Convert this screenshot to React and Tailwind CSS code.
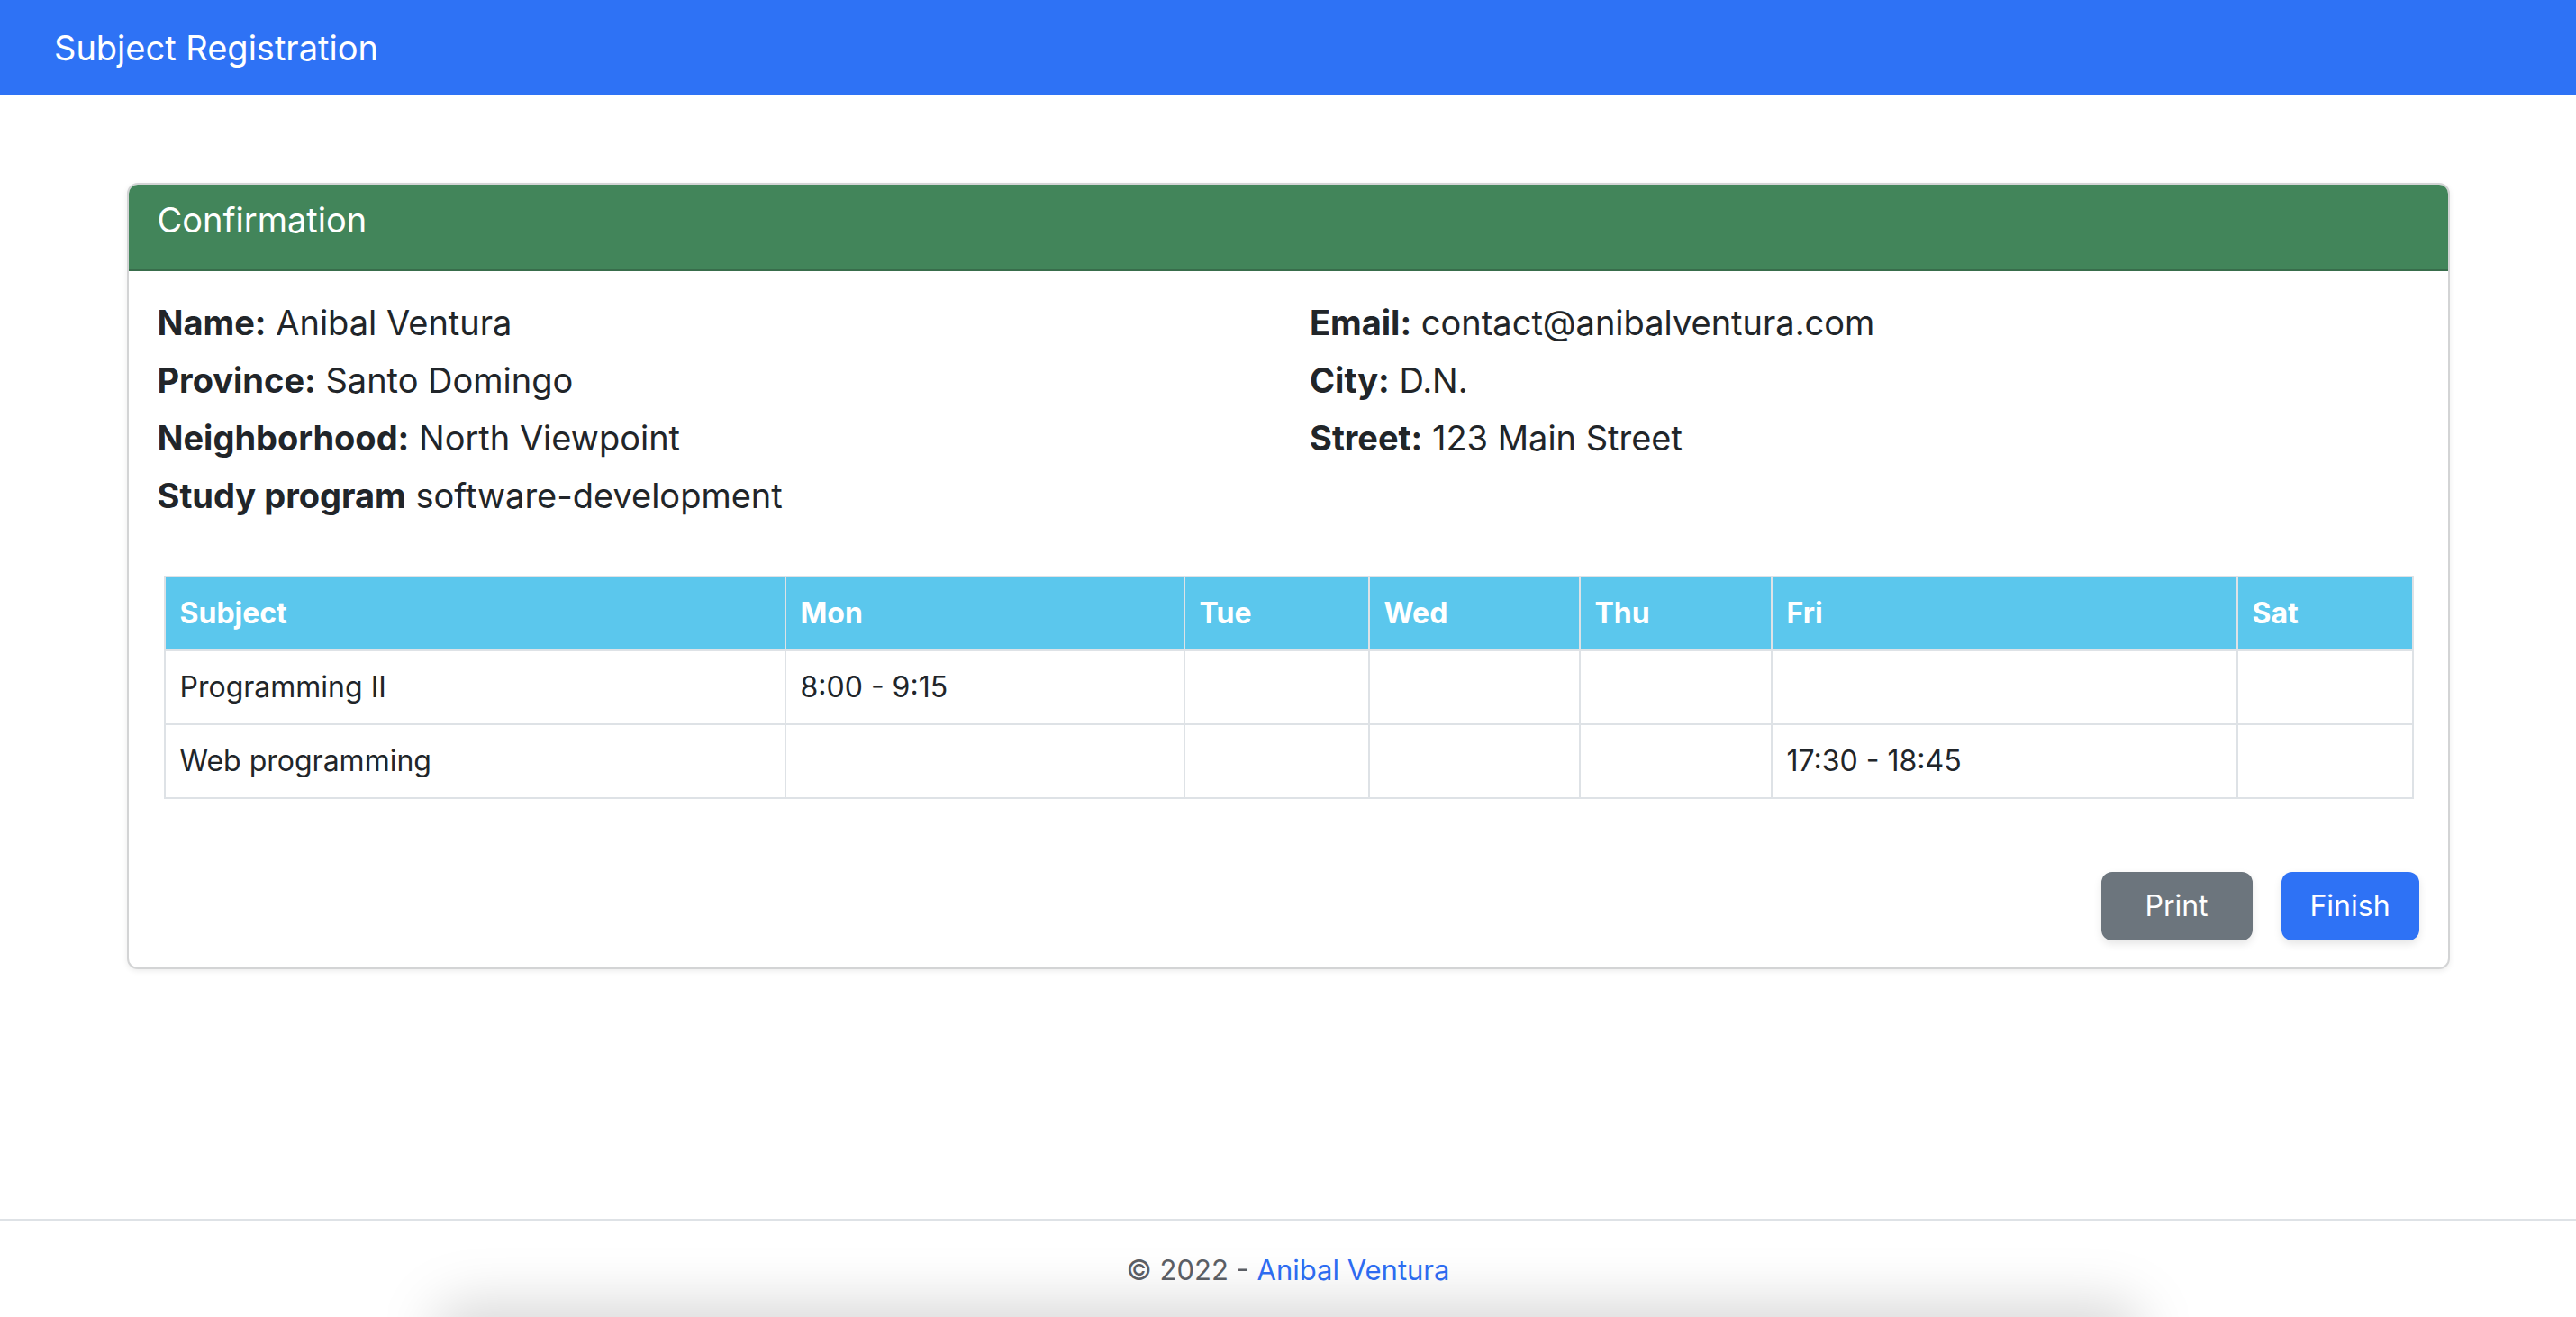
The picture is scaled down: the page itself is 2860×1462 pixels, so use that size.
import React from "react";

const info = [
  [["Name:", "Anibal Ventura"], ["Email:", "contact@anibalventura.com"]],
  [["Province:", "Santo Domingo"], ["City:", "D.N."]],
  [["Neighborhood:", "North Viewpoint"], ["Street:", "123 Main Street"]],
  [["Study program", "software-development"], null],
];

const cols = ["Subject", "Mon", "Tue", "Wed", "Thu", "Fri", "Sat"];
const widths = [689, 443, 205, 234, 213, 517, 195];

const rows = [
  ["Programming II", "8:00 - 9:15", "", "", "", "", ""],
  ["Web programming", "", "", "", "", "17:30 - 18:45", ""],
];

export default function App() {
  return (
    <div
      className="relative flex h-[1462px] w-[2860px] flex-col overflow-hidden bg-white text-[#212529]"
      style={{ fontFamily: "Inter, 'Noto Sans', sans-serif" }}
    >
      <nav className="flex h-[106px] shrink-0 items-center bg-[#2e72f5] px-[60px]">
        <span className="text-[38px] leading-[60px] text-white">Subject Registration</span>
      </nav>

      <main className="flex-1 pt-[97px]">
        <div className="mx-auto w-[2579px] overflow-hidden rounded-[12px] border-2 border-[#d3d4d5] bg-white shadow-[0_2px_6px_rgba(0,0,0,0.08)]">
          <div className="border-b-2 border-[#386d4b] bg-[#42855a] px-[32px] pt-[15px] pb-[31px]">
            <h5 className="text-[38px] leading-[48px] text-white">Confirmation</h5>
          </div>
          <div className="px-[32px] pt-[25px] pb-[30px]">
            <div className="grid grid-cols-2 gap-x-[48px]">
              {info.map((r, i) => (
                <React.Fragment key={i}>
                  {r.map((c, j) => (
                    <div key={j} className="h-[64px] text-[38px] leading-[64px]">
                      {c && (
                        <>
                          <span className="font-bold">{c[0]}</span> {c[1]}
                        </>
                      )}
                    </div>
                  ))}
                </React.Fragment>
              ))}
            </div>

            <table className="mt-[57px] ml-[7px] w-[2496px] table-fixed border-collapse border-2 border-[#dee2e6] text-[32px] leading-[48px]">
              <colgroup>
                {widths.map((w, i) => (
                  <col key={i} style={{ width: w }} />
                ))}
              </colgroup>
              <thead>
                <tr className="bg-[#5bc7ed]">
                  {cols.map((c) => (
                    <th
                      key={c}
                      className="border-2 border-[#dee2e6] px-[16px] py-[16px] text-left font-bold text-white"
                    >
                      {c}
                    </th>
                  ))}
                </tr>
              </thead>
              <tbody>
                {rows.map((r, i) => (
                  <tr key={i}>
                    {r.map((c, j) => (
                      <td key={j} className="h-[80px] border-2 border-[#dee2e6] px-[16px] py-[16px]">
                        {c}
                      </td>
                    ))}
                  </tr>
                ))}
              </tbody>
            </table>

            <div className="mt-[81px] flex justify-end gap-[32px]">
              <button className="flex h-[76px] w-[168px] items-center justify-center rounded-[12px] bg-[#6c757d] text-[32px] text-white shadow-[0_4px_10px_rgba(0,0,0,0.10)]">
                Print
              </button>
              <button className="flex h-[76px] w-[153px] items-center justify-center rounded-[12px] bg-[#2e72f5] text-[32px] text-white shadow-[0_4px_10px_rgba(0,0,0,0.10)]">
                Finish
              </button>
            </div>
          </div>
        </div>
      </main>

      <footer className="h-[109px] shrink-0 border-t-2 border-[#dee2e6] pt-[31px] text-center text-[31px] leading-[48px] text-[#5c6066]">
        © 2022 - <a className="text-[#2e6ef5]">Anibal Ventura</a>
      </footer>

      <div className="pointer-events-none absolute top-[1445px] left-[480px] h-[80px] w-[1900px] rounded-[40px] bg-black/15 blur-[30px]" />
    </div>
  );
}
